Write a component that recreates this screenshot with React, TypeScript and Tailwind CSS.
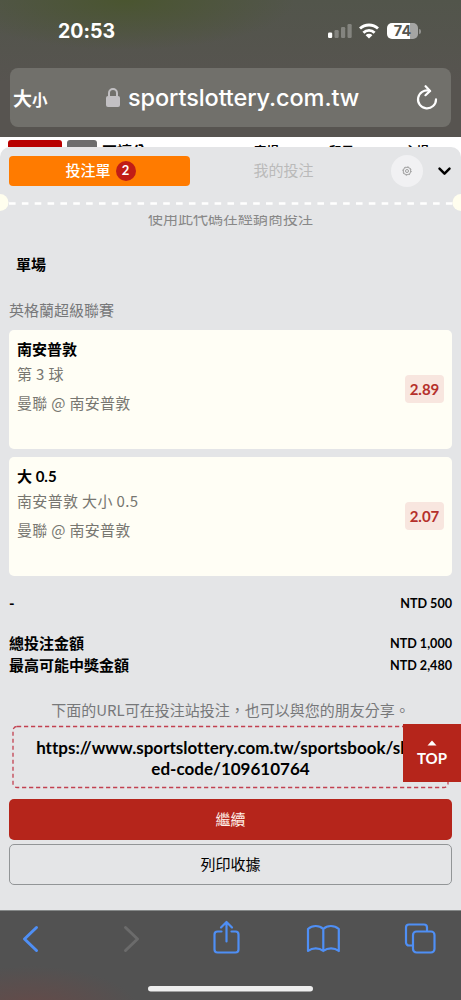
import { useState } from "react";

interface Bet {
  title: string;
  market: string;
  match: string;
  odds: string;
}

const bets: Bet[] = [
  { title: "南安普敦", market: "第 3 球", match: "曼聯 @ 南安普敦", odds: "2.89" },
  { title: "大 0.5", market: "南安普敦 大小 0.5", match: "曼聯 @ 南安普敦", odds: "2.07" },
];

const StatusBar = () => (
  <div className="flex h-[68px] items-start justify-between pl-[58px] pr-[40px] pt-[20px] text-white">
    <span className="font-['Inter','Noto_Sans_CJK_TC',sans-serif] text-[19.5px] font-bold leading-[23px]">20:53</span>
    <div className="flex items-center pt-[3px]">
      <svg width="24" height="16" viewBox="0 0 24 16" fill="#fff">
        <rect x="0" y="9.5" width="4.2" height="5.5" rx="1.2" />
        <g opacity="0.28">
          <rect x="6.5" y="7" width="4.2" height="8" rx="1.2" />
          <rect x="13" y="4" width="4.2" height="11" rx="1.2" />
          <rect x="19.5" y="1" width="4.2" height="14" rx="1.2" />
        </g>
      </svg>
      <svg className="ml-[7px]" width="20" height="16" viewBox="0 0 20 16" fill="none" stroke="#fff" strokeWidth="2.8">
        <path d="M1 5.6a13 13 0 0 1 18 0" />
        <path d="M4.4 9.7a8 8 0 0 1 11.2 0" />
        <path d="M10 15.4 6.6 12.2a4.8 4.8 0 0 1 6.8 0Z" fill="#fff" stroke="none" />
      </svg>
      <div className="ml-[8px] flex h-4 w-[31px] items-center justify-center rounded-[5px] bg-linear-to-r from-white from-75% to-[#a5a5a3] to-75% font-['Inter',sans-serif] text-[14.5px] font-bold leading-none text-[#555550]">
        74
      </div>
      <div className="ml-px h-[5px] w-[2px] rounded-r-full bg-[#92928f]" />
    </div>
  </div>
);

const AddressBar = () => (
  <div className="mx-[10px] flex h-[59px] items-center rounded-[8px] bg-[#71706b] pl-[3px] pr-[13px] text-white">
    <div className="flex w-[91px] items-baseline font-['Noto_Sans_CJK_TC',sans-serif] font-bold leading-none">
      <span className="text-[19px]">大</span>
      <span className="text-[15.5px]">小</span>
    </div>
    <svg width="18" height="22" viewBox="0 0 18 22" className="mr-[6px]">
      <path d="M5 10V6a4 4 0 0 1 8 0v4" fill="none" stroke="#c2c0c3" strokeWidth="2" />
      <rect x="2" y="9" width="14" height="11" rx="2" fill="#c2c0c3" />
    </svg>
    <span className="font-['Inter',sans-serif] text-[23.5px] font-medium leading-[30px] tracking-[-0.1px]">sportslottery.com.tw</span>
    <svg className="ml-auto" width="22" height="26" viewBox="0 0 22 26" fill="none" stroke="#fff" strokeWidth="2.2" strokeLinecap="round" strokeLinejoin="round">
      <path d="M13.3 5.7A9 9 0 1 0 20 14.4" />
      <path d="m9.6 1.2 4.5 4.7-4.6 4.3" />
    </svg>
  </div>
);

const BetCard = ({ bet }: { bet: Bet }) => (
  <div className="flex h-[118.5px] items-center justify-between rounded-[5px] bg-[#fffef5] px-2">
    <div className="h-full pt-[7px]">
      <p className="text-[15px] font-bold leading-[24px] text-black">{bet.title}</p>
      <p className="font-['Noto_Sans_CJK_TC',sans-serif] text-[15px] leading-[25px] tracking-[0.35px] text-[#777670]">{bet.market}</p>
      <p className="mt-[3px] font-['Noto_Sans_CJK_TC',sans-serif] text-[15px] leading-[28px] tracking-[0.3px] text-[#777670]">{bet.match}</p>
    </div>
    <span className="flex h-[28px] w-[39px] items-center justify-center rounded-[4px] bg-[#f8e6df] text-[15px] font-bold text-[#b5302b]">
      {bet.odds}
    </span>
  </div>
);

const AmountRow = ({ label, amount }: { label: string; amount: string }) => (
  <div className="flex h-[22.5px] items-center justify-between text-black">
    <span className="text-[15px] font-bold leading-none">{label}</span>
    <span className="pt-[2px] text-[12.6px] font-bold leading-none">{amount}</span>
  </div>
);

const BottomToolbar = () => (
  <footer className="h-[90px] border-t border-[#858888] bg-[#525252] bg-[radial-gradient(ellipse_110px_45px_at_30px_100px,#664a48,transparent)]">
    <svg width="461" height="89" viewBox="0 911 461 89" fill="none" stroke="#4f8ff5" strokeWidth="2.2" strokeLinecap="round" strokeLinejoin="round">
      <path d="M36.5 927.5 24.5 939l12 11.5" strokeWidth="3" />
      <path d="m125.5 927.5 12 11.5-12 11.5" stroke="#6b6b6b" strokeWidth="3" />
      <path d="M221.5 931.5h-4a3 3 0 0 0-3 3v15a3 3 0 0 0 3 3h18a3 3 0 0 0 3-3v-15a3 3 0 0 0-3-3h-4" />
      <path d="M226.5 941.5v-19m-5.5 5 5.5-5.5 5.5 5.5" />
      <path d="M323.3 929c-4-4-11-4-15.3 0v22c4.5-3.500 11-3.500 15.3 0 4.5-3.500 11-3.500 15.500 0v-22c-4.500-4-11.500-4-15.500 0Zm0 0v22" />
      <path d="M412 945.5h-3a3 3 0 0 1-3-3v-15a3 3 0 0 1 3-3h15a3 3 0 0 1 3 3v3" />
      <rect x="413" y="931.5" width="21.5" height="21" rx="3.5" />
      <rect x="148" y="986" width="165" height="5.5" rx="2.75" fill="#eee" stroke="none" />
    </svg>
  </footer>
);

export default function App() {
  const [activeTab, setActiveTab] = useState<"slip" | "mine">("slip");

  return (
    <div className="relative flex h-[1000px] w-[461px] flex-col overflow-hidden bg-white font-['Lato','Noto_Sans_CJK_TC',sans-serif] [font-variant-ligatures:none]">
      <header className="h-[137px] shrink-0 bg-[#575651] bg-[radial-gradient(ellipse_170px_50px_at_125px_0,#4a5530,transparent),linear-gradient(to_bottom,#52554b,#575450_60%)]">
        <StatusBar />
        <AddressBar />
      </header>

      {/* Page behind the slip */}
      <div className="flex h-[10px] shrink-0 overflow-hidden bg-white pl-[8px] pt-[3px] text-black">
        <div className="h-[30px] w-[54px] shrink-0 rounded-t-[3px] bg-[#b80000]" />
        <div className="ml-[5px] h-[30px] w-[30px] shrink-0 rounded-t-[3px] bg-[#6d6d6d]" />
        <span className="ml-[5px] w-[152px] shrink-0 pt-[2px] text-[15px] font-bold leading-[18px]">不讓分</span>
        <span className="w-[75px] shrink-0 pt-[4px] text-[12.5px] font-bold leading-[15px]">客場</span>
        <span className="w-[75px] shrink-0 pt-[4px] text-[12.5px] font-bold leading-[15px]">和局</span>
        <span className="shrink-0 pt-[4px] text-[12.5px] font-bold leading-[15px]">主場</span>
      </div>

      {/* Bet slip */}
      <main className="h-[763px] shrink-0 rounded-t-[10px] bg-[#e4e5e7]">
        <div className="flex h-[47px] items-center px-[9px]">
          <button
            onClick={() => setActiveTab("slip")}
            className={`flex h-[30px] w-[181px] items-center justify-center gap-[5px] rounded-[4px] pl-[2px] text-[15px] ${
              activeTab === "slip" ? "bg-[#ff7b00] font-medium text-white" : "text-[#bababa]"
            }`}
          >
            投注單
            <span className="flex h-[20px] w-[20px] items-center justify-center rounded-full bg-[#c11d16] text-[13px] font-bold text-white">2</span>
          </button>
          <button
            onClick={() => setActiveTab("mine")}
            className={`h-[30px] w-[187px] text-[15px] ${
              activeTab === "mine" ? "bg-[#ff7b00] font-medium text-white" : "text-[#bababa]"
            }`}
          >
            我的投注
          </button>
          <button className="ml-[14px] flex h-[32px] w-[32px] shrink-0 items-center justify-center rounded-full bg-[#f1f1f3]">
            <svg width="10" height="10" viewBox="0 0 10 10" fill="none" stroke="#999" strokeWidth="0.9">
              <circle cx="5" cy="5" r="3.8" />
              <circle cx="5" cy="5" r="1.5" />
              <circle cx="5" cy="5" r="4.3" strokeDasharray="1.2 2.18" />
            </svg>
          </button>
          <svg className="ml-auto" width="15" height="10" viewBox="0 0 15 10" fill="none" stroke="#000" strokeWidth="2.5" strokeLinecap="round" strokeLinejoin="round">
            <path d="m2.5 2.7 5 5 5-5" />
          </svg>
        </div>

        {/* Perforated edge */}
        <svg className="block" width="461" height="21" viewBox="0 0 461 21">
          <path d="M9 9.5H453" stroke="#fff" strokeWidth="2.6" strokeDasharray="6.6 6.25" />
          <circle cx="0" cy="8.5" r="8.5" fill="#fffeee" />
          <circle cx="461" cy="8.5" r="8.5" fill="#fffeee" />
        </svg>

        <div className="h-[695px] overflow-hidden px-[9px]">
          <p className="-mt-[8px] text-center text-[15px] leading-[22px] text-[#888]">使用此代碼在經銷商投注</p>
          <h2 className="mt-[24px] pl-[7px] text-[15px] font-bold leading-[22px] text-black">單場</h2>
          <h3 className="mt-[24px] text-[15px] leading-[22px] text-[#77787a]">英格蘭超級聯賽</h3>

          <div className="mt-[9px] flex flex-col gap-[8.5px]">
            {bets.map((bet) => (
              <BetCard key={bet.title} bet={bet} />
            ))}
          </div>

          <div className="mt-[17px]">
            <AmountRow label="-" amount="NTD 500" />
          </div>
          <div className="mt-[17px]">
            <AmountRow label="總投注金額" amount="NTD 1,000" />
            <AmountRow label="最高可能中獎金額" amount="NTD 2,480" />
          </div>

          <p className="mt-[22px] text-center font-['Noto_Sans_CJK_TC',sans-serif] text-[15px] leading-[22px] text-[#77787a]">
            下面的URL可在投注站投注，也可以與您的朋友分享。
          </p>
          <div className="relative mx-[3px] mt-[4px] h-[64px] pt-[11.5px]">
            <svg className="absolute inset-0" width="438" height="64" viewBox="0 0 438 64">
              <rect x="1" y="1.5" width="435" height="61" rx="4" fill="none" stroke="#c24150" strokeWidth="1.3" strokeDasharray="4.2 2.8" />
            </svg>
            <p className="relative text-center text-[17px] font-bold leading-[21px] text-black">
              https://www.sportslottery.com.tw/sportsbook/shar
              <br />
              ed-code/109610764
            </p>
          </div>

          <button className="mt-[10px] block h-[41px] w-full rounded-[5px] bg-[#b5251b] text-[15px] text-[#fff0e8]">繼續</button>
          <button className="mt-[4px] block h-[41px] w-full rounded-[5px] border border-[#929597] text-[15px] text-black">列印收據</button>
        </div>
      </main>

      <BottomToolbar />

      <button className="absolute right-0 top-[724px] flex h-[58px] w-[58px] flex-col items-center bg-[#b5251b] pt-[16px] text-[15px] font-bold leading-[20px] text-white">
        <svg className="mb-[2px]" width="10" height="6" viewBox="0 0 10 6" fill="#fff">
          <path d="M0.5 5.5 5 0.5l4.5 5Z" />
        </svg>
        TOP
      </button>
    </div>
  );
}
